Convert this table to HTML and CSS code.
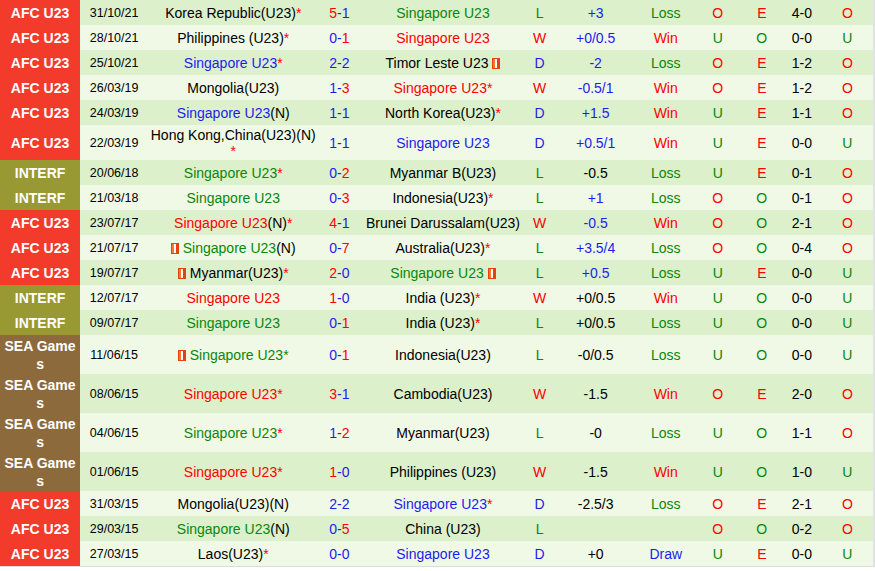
FILE: index.html
```html
<!DOCTYPE html>
<html>
<head>
<meta charset="utf-8">
<link rel="stylesheet" href="styles.css">
</head>
<body>
<table class="results">
<colgroup>
<col class="c-lg"><col class="c-dt"><col class="c-hm"><col class="c-sc"><col class="c-aw"><col class="c-wl"><col class="c-hc"><col class="c-rs"><col class="c-ou"><col class="c-oe"><col class="c-ht"><col class="c-ls">
</colgroup>
<tbody>
<tr class="odd"><td class="lg afc">AFC U23</td><td class="dt">31/10/21</td><td>Korea Republic(U23)<span class="st">*</span></td><td><span class="r">5</span><span class="b">-1</span></td><td class="g">Singapore U23</td><td class="g">L</td><td class="b">+3</td><td class="g">Loss</td><td class="r">O</td><td class="r">E</td><td>4-0</td><td class="r">O</td></tr>
<tr class="even"><td class="lg afc">AFC U23</td><td class="dt">28/10/21</td><td>Philippines (U23)<span class="st">*</span></td><td><span class="b">0-</span><span class="r">1</span></td><td class="r">Singapore U23</td><td class="r">W</td><td class="b">+0/0.5</td><td class="r">Win</td><td class="g">U</td><td class="g">O</td><td>0-0</td><td class="g">U</td></tr>
<tr class="odd"><td class="lg afc">AFC U23</td><td class="dt">25/10/21</td><td><span class="b">Singapore U23</span><span class="st">*</span></td><td class="b">2-2</td><td>Timor Leste U23 <span class="card"><svg width="8" height="11" viewBox="0 0 8 11"><rect width="8" height="11" fill="#e8400e"/><rect x="1" y="1" width="2" height="9" fill="#f77a2a"/><rect x="3" y="1" width="2" height="9" fill="#fff"/></svg></span></td><td class="b">D</td><td class="b">-2</td><td class="g">Loss</td><td class="r">O</td><td class="r">E</td><td>1-2</td><td class="r">O</td></tr>
<tr class="even"><td class="lg afc">AFC U23</td><td class="dt">26/03/19</td><td>Mongolia(U23)</td><td><span class="b">1-</span><span class="r">3</span></td><td class="r">Singapore U23*</td><td class="r">W</td><td class="b">-0.5/1</td><td class="r">Win</td><td class="r">O</td><td class="r">E</td><td>1-2</td><td class="r">O</td></tr>
<tr class="odd"><td class="lg afc">AFC U23</td><td class="dt">24/03/19</td><td><span class="b">Singapore U23</span>(N)</td><td class="b">1-1</td><td>North Korea(U23)<span class="st">*</span></td><td class="b">D</td><td class="b">+1.5</td><td class="r">Win</td><td class="g">U</td><td class="r">E</td><td>1-1</td><td class="r">O</td></tr>
<tr class="even"><td class="lg afc">AFC U23</td><td class="dt">22/03/19</td><td>Hong Kong,China(U23)(N)<wbr><span class="st">*</span></td><td class="b">1-1</td><td class="b">Singapore U23</td><td class="b">D</td><td class="b">+0.5/1</td><td class="r">Win</td><td class="g">U</td><td class="r">E</td><td>0-0</td><td class="g">U</td></tr>
<tr class="odd"><td class="lg intf">INTERF</td><td class="dt">20/06/18</td><td><span class="g">Singapore U23</span><span class="st">*</span></td><td><span class="b">0-</span><span class="r">2</span></td><td>Myanmar B(U23)</td><td class="g">L</td><td>-0.5</td><td class="g">Loss</td><td class="g">U</td><td class="r">E</td><td>0-1</td><td class="r">O</td></tr>
<tr class="even"><td class="lg intf">INTERF</td><td class="dt">21/03/18</td><td class="g">Singapore U23</td><td><span class="b">0-</span><span class="r">3</span></td><td>Indonesia(U23)<span class="st">*</span></td><td class="g">L</td><td class="b">+1</td><td class="g">Loss</td><td class="r">O</td><td class="g">O</td><td>0-1</td><td class="r">O</td></tr>
<tr class="odd"><td class="lg afc">AFC U23</td><td class="dt">23/07/17</td><td><span class="r">Singapore U23</span>(N)<span class="st">*</span></td><td><span class="r">4</span><span class="b">-1</span></td><td>Brunei Darussalam(U23)</td><td class="r">W</td><td class="b">-0.5</td><td class="r">Win</td><td class="r">O</td><td class="g">O</td><td>2-1</td><td class="r">O</td></tr>
<tr class="even"><td class="lg afc">AFC U23</td><td class="dt">21/07/17</td><td><span class="card"><svg width="8" height="11" viewBox="0 0 8 11"><rect width="8" height="11" fill="#e8400e"/><rect x="1" y="1" width="2" height="9" fill="#f77a2a"/><rect x="3" y="1" width="2" height="9" fill="#fff"/></svg></span> <span class="g">Singapore U23</span>(N)</td><td><span class="b">0-</span><span class="r">7</span></td><td>Australia(U23)<span class="st">*</span></td><td class="g">L</td><td class="b">+3.5/4</td><td class="g">Loss</td><td class="r">O</td><td class="g">O</td><td>0-4</td><td class="r">O</td></tr>
<tr class="odd"><td class="lg afc">AFC U23</td><td class="dt">19/07/17</td><td><span class="card"><svg width="8" height="11" viewBox="0 0 8 11"><rect width="8" height="11" fill="#e8400e"/><rect x="1" y="1" width="2" height="9" fill="#f77a2a"/><rect x="3" y="1" width="2" height="9" fill="#fff"/></svg></span> Myanmar(U23)<span class="st">*</span></td><td><span class="r">2</span><span class="b">-0</span></td><td><span class="g">Singapore U23</span> <span class="card"><svg width="8" height="11" viewBox="0 0 8 11"><rect width="8" height="11" fill="#e8400e"/><rect x="1" y="1" width="2" height="9" fill="#f77a2a"/><rect x="3" y="1" width="2" height="9" fill="#fff"/></svg></span></td><td class="g">L</td><td class="b">+0.5</td><td class="g">Loss</td><td class="g">U</td><td class="r">E</td><td>0-0</td><td class="g">U</td></tr>
<tr class="even"><td class="lg intf">INTERF</td><td class="dt">12/07/17</td><td class="r">Singapore U23</td><td><span class="r">1</span><span class="b">-0</span></td><td>India (U23)<span class="st">*</span></td><td class="r">W</td><td>+0/0.5</td><td class="r">Win</td><td class="g">U</td><td class="g">O</td><td>0-0</td><td class="g">U</td></tr>
<tr class="odd"><td class="lg intf">INTERF</td><td class="dt">09/07/17</td><td class="g">Singapore U23</td><td><span class="b">0-</span><span class="r">1</span></td><td>India (U23)<span class="st">*</span></td><td class="g">L</td><td>+0/0.5</td><td class="g">Loss</td><td class="g">U</td><td class="g">O</td><td>0-0</td><td class="g">U</td></tr>
<tr class="even"><td class="lg sea">SEA Games</td><td class="dt">11/06/15</td><td><span class="card"><svg width="8" height="11" viewBox="0 0 8 11"><rect width="8" height="11" fill="#e8400e"/><rect x="1" y="1" width="2" height="9" fill="#f77a2a"/><rect x="3" y="1" width="2" height="9" fill="#fff"/></svg></span> <span class="g">Singapore U23*</span></td><td><span class="b">0-</span><span class="r">1</span></td><td>Indonesia(U23)</td><td class="g">L</td><td>-0/0.5</td><td class="g">Loss</td><td class="g">U</td><td class="g">O</td><td>0-0</td><td class="g">U</td></tr>
<tr class="odd"><td class="lg sea">SEA Games</td><td class="dt">08/06/15</td><td class="r">Singapore U23*</td><td><span class="r">3</span><span class="b">-1</span></td><td>Cambodia(U23)</td><td class="r">W</td><td>-1.5</td><td class="r">Win</td><td class="r">O</td><td class="r">E</td><td>2-0</td><td class="r">O</td></tr>
<tr class="even"><td class="lg sea">SEA Games</td><td class="dt">04/06/15</td><td><span class="g">Singapore U23</span><span class="st">*</span></td><td><span class="b">1-</span><span class="r">2</span></td><td>Myanmar(U23)</td><td class="g">L</td><td>-0</td><td class="g">Loss</td><td class="g">U</td><td class="g">O</td><td>1-1</td><td class="r">O</td></tr>
<tr class="odd"><td class="lg sea">SEA Games</td><td class="dt">01/06/15</td><td class="r">Singapore U23*</td><td><span class="r">1</span><span class="b">-0</span></td><td>Philippines (U23)</td><td class="r">W</td><td>-1.5</td><td class="r">Win</td><td class="g">U</td><td class="g">O</td><td>1-0</td><td class="g">U</td></tr>
<tr class="even"><td class="lg afc">AFC U23</td><td class="dt">31/03/15</td><td>Mongolia(U23)(N)</td><td class="b">2-2</td><td><span class="b">Singapore U23</span><span class="st">*</span></td><td class="b">D</td><td>-2.5/3</td><td class="g">Loss</td><td class="r">O</td><td class="r">E</td><td>2-1</td><td class="r">O</td></tr>
<tr class="odd"><td class="lg afc">AFC U23</td><td class="dt">29/03/15</td><td><span class="g">Singapore U23</span>(N)</td><td><span class="b">0-</span><span class="r">5</span></td><td>China (U23)</td><td class="g">L</td><td></td><td></td><td class="r">O</td><td class="g">O</td><td>0-2</td><td class="r">O</td></tr>
<tr class="even"><td class="lg afc">AFC U23</td><td class="dt">27/03/15</td><td>Laos(U23)<span class="st">*</span></td><td class="b">0-0</td><td class="b">Singapore U23</td><td class="b">D</td><td>+0</td><td class="b">Draw</td><td class="g">U</td><td class="r">E</td><td>0-0</td><td class="g">U</td></tr>
</tbody>
</table>
</body>
</html>
```

FILE: styles.css
```css
html, body {
  margin: 0;
  padding: 0;
  background: #ffffff;
}

body {
  font-family: "Liberation Sans", Arial, sans-serif;
  font-size: 14px;
  color: #000;
}

.results {
  width: 875px;
  border-collapse: collapse;
  table-layout: fixed;
  border-right: 2px solid #e2e2e2;
  border-bottom: 1px solid #dcdcdc;
}

.c-lg { width: 80px; }
.c-dt { width: 68px; }
.c-hm { width: 170px; }
.c-sc { width: 42px; }
.c-aw { width: 165px; }
.c-wl { width: 28px; }
.c-hc { width: 84px; }
.c-rs { width: 56px; }
.c-ou { width: 48px; }
.c-oe { width: 40px; }
.c-ht { width: 40px; }
.c-ls { width: 52px; }

.results tr {
  height: 25px;
}

.results tr.odd {
  background: #dcf0cc;
}

.results tr.even {
  background: #f0f9e6;
}

.results td {
  padding: 3px 1px 1px;
  text-align: center;
  vertical-align: middle;
  line-height: 15.5px;
  overflow: hidden;
}

.results td.lg {
  color: #ffffff;
  font-weight: bold;
  line-height: 17.5px;
  word-break: break-all;
}

.afc { background: #f33b2b; }
.intf { background: #999933; }
.sea { background: #8c6a3b; }

.results td.dt {
  font-size: 12.5px;
}

.r { color: #ff0000; }
.b { color: #1c1cf0; }
.g { color: #0a870a; }
.st { color: #ff0000; }

.card {
  display: inline-block;
  vertical-align: -1px;
  line-height: 0;
}
```
